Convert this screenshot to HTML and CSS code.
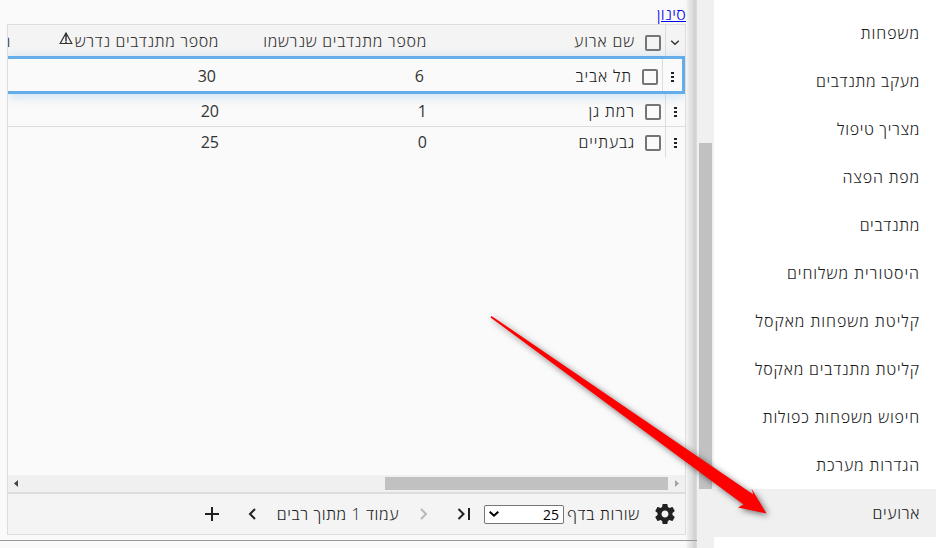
FILE: index.html
```html
<!DOCTYPE html>
<html lang="he" dir="rtl">
<head>
<meta charset="utf-8">
<title>ארועים</title>
<link rel="stylesheet" href="styles.css">
</head>
<body>
<div class="app">
  <nav class="menu">
    <a class="item wide">משפחות</a>
    <a class="item">מעקב מתנדבים</a>
    <a class="item">מצריך טיפול</a>
    <a class="item mid">מפת הפצה</a>
    <a class="item">מתנדבים</a>
    <a class="item wide">היסטורית משלוחים</a>
    <a class="item wide">קליטת משפחות מאקסל</a>
    <a class="item mid">קליטת מתנדבים מאקסל</a>
    <a class="item mid">חיפוש משפחות כפולות</a>
    <a class="item mid">הגדרות מערכת</a>
    <a class="item active">ארועים</a>
  </nav>
  <div class="vscroll"><div class="vthumb"></div></div>
  <main class="content">
    <div class="filter"><a href="#">סינון</a></div>
    <section class="grid">
      <div class="row head">
        <div class="handle"><svg width="10" height="6" viewBox="0 0 10 6"><path d="M1.2 .8 5 4.3 8.8 .8" fill="none" stroke="#333" stroke-width="1.4"/></svg></div>
        <div class="check"><i></i></div>
        <div class="cell name">שם ארוע</div>
        <div class="cell">מספר מתנדבים שנרשמו</div>
        <div class="cell required">מספר מתנדבים נדרש<svg class="warn" width="14" height="13" viewBox="0 0 14 13"><path d="M7 1 12.8 11.5H1.2Z" fill="none" stroke="#333" stroke-width="1.2"/><path d="M7 1V9.2M6 3.3H8M7 9.8V11" stroke="#333" stroke-width="1.5"/></svg></div>
        <div class="cell">תאריך</div>
      </div>
      <div class="row selected">
        <div class="handle"><b></b><b></b><b></b></div>
        <div class="check"><i></i></div>
        <div class="cell name">תל אביב</div><div class="cell num">6</div><div class="cell num">30</div>
      </div>
      <div class="row second">
        <div class="handle"><b></b><b></b><b></b></div>
        <div class="check"><i></i></div>
        <div class="cell name">רמת גן</div><div class="cell num">1</div><div class="cell num">20</div>
      </div>
      <div class="row last">
        <div class="handle"><b></b><b></b><b></b></div>
        <div class="check"><i></i></div>
        <div class="cell name">גבעתיים</div><div class="cell num">0</div><div class="cell num">25</div>
      </div>
      <div class="space"></div>
      <div class="hscroll">
        <svg width="17" height="17"><path d="M7 5v7l4-3.5z" fill="#a3a3a3"/></svg>
        <div class="hthumb"></div>
        <svg class="left" width="17" height="17"><path d="M10 5v7L6 8.5z" fill="#444"/></svg>
      </div>
      <footer class="pager">
        <svg class="gear" width="24" height="24" viewBox="0 0 24 24"><path fill="#212121" d="M19.43 12.98c.04-.32.07-.64.07-.98s-.03-.66-.07-.98l2.11-1.65c.19-.15.24-.42.12-.64l-2-3.46c-.12-.22-.39-.3-.61-.22l-2.49 1c-.52-.4-1.08-.73-1.69-.98l-.38-2.65A.488.488 0 0 0 14 2h-4c-.25 0-.46.18-.49.42l-.38 2.65c-.61.25-1.17.59-1.69.98l-2.49-1c-.23-.09-.49 0-.61.22l-2 3.46c-.13.22-.07.49.12.64l2.11 1.65c-.04.32-.07.65-.07.98s.03.66.07.98l-2.11 1.65c-.19.15-.24.42-.12.64l2 3.46c.12.22.39.3.61.22l2.49-1c.52.4 1.08.73 1.69.98l.38 2.65c.03.24.24.42.49.42h4c.25 0 .46-.18.49-.42l.38-2.65c.61-.25 1.17-.59 1.69-.98l2.49 1c.23.09.49 0 .61-.22l2-3.46c.12-.22.07-.49-.12-.64l-2.11-1.65zM12 15.5c-1.93 0-3.5-1.57-3.5-3.5s1.57-3.5 3.5-3.5 3.5 1.57 3.5 3.5-1.57 3.5-3.5 3.5z"/></svg>
        <span class="label">שורות בדף</span>
        <div class="select"><span>25</span><svg width="12" height="8" viewBox="0 0 12 8"><path d="M1.7 1.7 6 5.7l4.3-4" fill="none" stroke="#000" stroke-width="2"/></svg></div>
        <svg class="first" width="14" height="14" viewBox="0 0 14 14"><path d="m1.5 2 5 5-5 5M12 1v12" fill="none" stroke="#212121" stroke-width="2"/></svg>
        <svg class="prev" width="10" height="14" viewBox="0 0 10 14"><path d="m2 2 5 5-5 5" fill="none" stroke="#b8b8b8" stroke-width="2"/></svg>
        <span class="page">עמוד 1 מתוך רבים</span>
        <svg class="next" width="10" height="14" viewBox="0 0 10 14"><path d="M8 2 3 7l5 5" fill="none" stroke="#212121" stroke-width="2"/></svg>
        <svg class="plus" width="14" height="14" viewBox="0 0 14 14"><path d="M7 0v14M0 7h14" stroke="#212121" stroke-width="2"/></svg>
      </footer>
    </section>
    <div class="rule"></div>
  </main>
</div>
<svg class="arrow" width="936" height="548" viewBox="0 0 936 548"><path fill="red" d="M490.5 317.5 491.5 316 753.3 494.5 751.5 488.5 766.5 513.5 738 507.5 743.5 504.5Z"/></svg>
</body>
</html>
```
FILE: styles.css
```css
* { box-sizing: border-box; }
body { margin: 0; background: #fafafa; color: #1c1c1c; font: 340 16px/24px "Open Sans", "Noto Sans", sans-serif; letter-spacing: .65px; overflow: hidden; }
svg { display: block; flex: none; }
.app { display: flex; height: 548px; }
.menu { width: 222px; flex: none; background: #fff; padding-top: 9px; }
.item { display: block; height: 48px; line-height: 48px; padding-right: 16px; white-space: nowrap; }
.mid { letter-spacing: .83px; }
.wide { letter-spacing: .97px; }
.active { background: #f0f0f0; }
.vscroll { width: 17px; flex: none; background: #f0f0f0; padding: 143px 2px 0; }
.vthumb { height: 346px; background: #c1c1c1; }
.content { width: 697px; flex: none; padding: 0 11px 0 7px; background: linear-gradient(to left, #dedede 0, #cfcfcf 2px, #dfdfdf 5px, #ebebeb 9px, #f8f8f8 11px, #fafafa 15px); display: flex; flex-direction: column; }
.filter { height: 24px; padding-top: 3px; line-height: 23px; letter-spacing: .35px; }
.filter a { color: #00e; }
.grid { height: 511px; border: 1px solid #ddd; display: flex; flex-direction: column; overflow: hidden; background: #fafafa; }
.row { display: flex; height: 33px; flex: none; border-bottom: 1px solid #ddd; }
.head { height: 31px; background: #f4f4f4; border: 0; color: #333; }
.selected { height: 38px; border: 3px solid #64ade8; border-left: 0; box-shadow: 0 2px 12px rgba(100, 173, 232, .35); position: relative; }
.last { border: 0; height: 31px; }
.handle { width: 20px; flex: none; border-left: 1px solid #ddd; display: flex; flex-direction: column; align-items: center; justify-content: center; gap: 2px; padding-right: 1px; }
.head .handle { padding-top: 5px; }
.handle b { width: 3px; height: 2px; background: #222; }
.check { width: 20px; flex: none; display: flex; align-items: center; justify-content: flex-end; }
.check i { width: 16px; height: 16px; border: 2px solid #757575; border-radius: 2px; }
.head .check { padding-top: 5px; }
.second .handle, .second .check, .selected .handle, .selected .check { padding-top: 3px; }
.cell { width: 208px; flex: none; padding-right: 10px; white-space: nowrap; line-height: 32px; display: flex; letter-spacing: .7px; }
.name { letter-spacing: .85px; }
.selected .cell, .second .cell { line-height: 34px; }
.last .cell { line-height: 31px; }
.num { letter-spacing: 0; font-weight: 400; color: #333; }
.required { letter-spacing: .6px; }
.warn { margin: 7px 2px 0 0; }
.space { flex: 1; }
.hscroll { height: 17px; flex: none; background: #f0f0f0; display: flex; align-items: center; }
.hthumb { width: 283px; height: 13px; background: #c1c1c1; }
.left { margin-right: auto; }
.pager { height: 42px; flex: none; border-top: 2px solid #ddd; background: #f4f4f4; display: flex; align-items: center; padding-right: 8px; letter-spacing: .6px; }
.label { width: 73px; margin-right: 13px; white-space: nowrap; letter-spacing: .75px; }
.select { width: 80px; height: 19px; margin-right: 3px; border: 1px solid #767676; border-radius: 2px; background: #fff; color: #000; display: flex; align-items: center; justify-content: space-between; padding: 0 4px 0 3px; font-size: 14px; line-height: 17px; font-weight: 400; letter-spacing: 0; }
.first { margin-right: 13px; }
.prev { margin-right: 28px; }
.page { width: 123px; margin-right: 20px; white-space: nowrap; }
.next { margin-right: 19px; }
.plus { margin-right: 28px; }
.rule { height: 1px; margin: 5px -11px 0 -7px; background: #999; }
.arrow { position: absolute; left: 0; top: 0; filter: drop-shadow(2px 2px 3px rgba(0, 0, 0, .55)); pointer-events: none; }
```
